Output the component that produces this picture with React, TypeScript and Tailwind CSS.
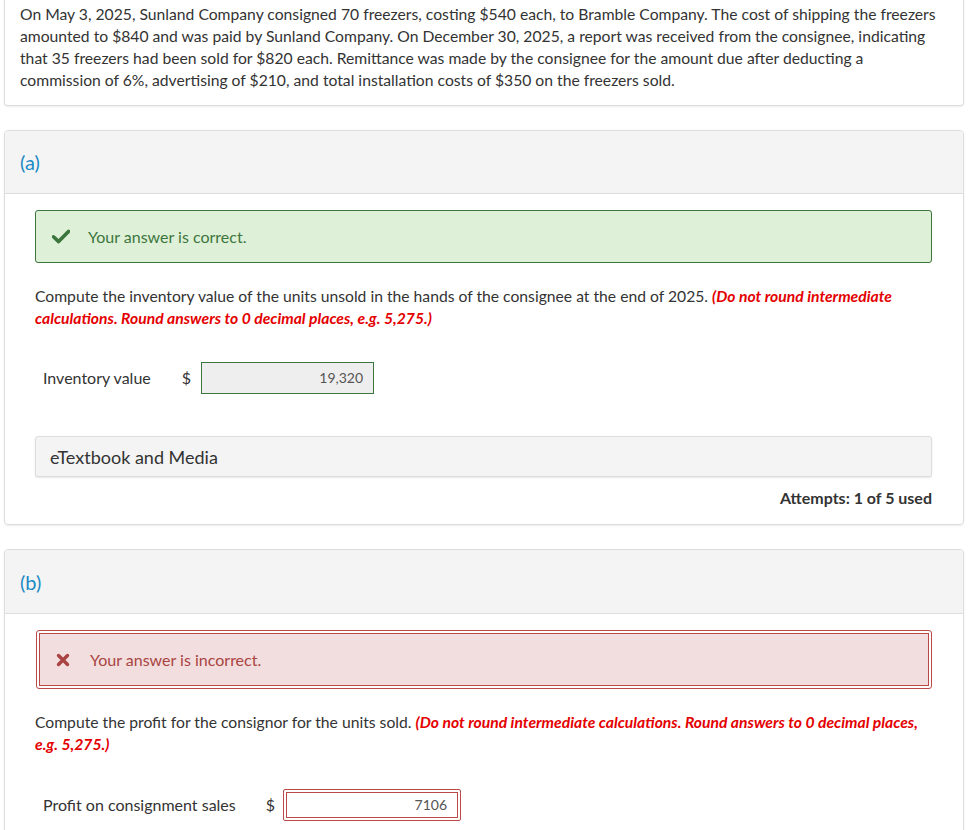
import React from "react";

const font = { fontFamily: "Lato, 'Open Sans', Arial, sans-serif" };

function Check() {
  return (
    <svg width="18" height="15" viewBox="0 0 18 15" className="shrink-0">
      <path d="M1.5 7.8 L6.6 12.6 L16.5 2.4" fill="none" stroke="#3c763d" strokeWidth="3.6" strokeLinecap="round" strokeLinejoin="round" />
    </svg>
  );
}

function Cross() {
  return (
    <svg width="14" height="14" viewBox="0 0 14 14" className="shrink-0">
      <path d="M2.5 2.5 L11.5 11.5 M11.5 2.5 L2.5 11.5" fill="none" stroke="#a94442" strokeWidth="3.4" strokeLinecap="round" />
    </svg>
  );
}

export default function App() {
  return (
    <div className="min-h-screen bg-white text-[#333] text-[15.7px] leading-[22px]" style={font}>
      <div className="w-[960px] ml-[4px] flex flex-col gap-[24px]">
        {/* Problem statement */}
        <div className="border border-t-0 border-[#ddd] rounded-b-[4px] shadow-[0_1px_2px_rgba(0,0,0,0.08)] pl-[15px] pr-[20px] pt-[3px] pb-[14px]">
          <p>
            On May 3, 2025, Sunland Company consigned 70 freezers, costing $540 each, to Bramble Company. The cost of shipping the freezers
            amounted to $840 and was paid by Sunland Company. On December 30, 2025, a report was received from the consignee, indicating
            that 35 freezers had been sold for $820 each. Remittance was made by the consignee for the amount due after deducting a
            commission of 6%, advertising of $210, and total installation costs of $350 on the freezers sold.
          </p>
        </div>

        {/* Part (a) */}
        <div className="border border-[#ddd] rounded-[4px] shadow-[0_1px_2px_rgba(0,0,0,0.08)]">
          <div className="bg-[#f4f4f4] border-b border-[#ddd] h-[63px] flex items-center pl-[15px] rounded-t-[4px]">
            <span className="text-[20px] text-[#1b8ac5]">(a)</span>
          </div>
          <div className="pl-[30px] pr-[31px] pt-[16px] pb-[15px]">
            <div className="h-[53px] bg-[#dff0d8] border border-[#3c763d] rounded-[3px] flex items-center pl-[16px] gap-[18px]">
              <Check />
              <span className="text-[#3c763d] text-[16px]">Your answer is correct.</span>
            </div>
            <p className="mt-[22px]">
              Compute the inventory value of the units unsold in the hands of the consignee at the end of 2025.{" "}
              <span className="text-[#e40000] font-bold italic">
                (Do not round intermediate calculations. Round answers to 0 decimal places, e.g. 5,275.)
              </span>
            </p>
            <div className="mt-[33px] flex items-center pl-[8px]">
              <span className="text-[16px]">Inventory value</span>
              <span className="ml-[31px] text-[16px]">$</span>
              <div className="ml-[10px] w-[173px] h-[32px] bg-[#eee] border border-[#3c763d] flex items-center justify-end pr-[10px] text-[14px] text-[#555]">
                19,320
              </div>
            </div>
            <div className="mt-[42px] h-[41px] bg-[#f4f4f4] border border-[#ddd] rounded-[3px] shadow-[0_1px_2px_rgba(0,0,0,0.1)] flex items-center pl-[14px] text-[18px]">
              eTextbook and Media
            </div>
            <div className="mt-[10px] text-right font-bold text-[16px]">Attempts: 1 of 5 used</div>
          </div>
        </div>

        {/* Part (b) */}
        <div className="border border-[#ddd] rounded-[4px] shadow-[0_1px_2px_rgba(0,0,0,0.08)]">
          <div className="bg-[#f4f4f4] border-b border-[#ddd] h-[64px] flex items-center pl-[15px] rounded-t-[4px]">
            <span className="text-[20px] text-[#1b8ac5]">(b)</span>
          </div>
          <div className="pl-[31px] pr-[31px] pt-[16px] pb-[10px]">
            <div className="h-[59px] border border-[#b94a48] rounded-[3px] p-[2px]">
              <div className="h-full bg-[#f2dede] border border-[#b94a48] flex items-center pl-[16px] gap-[20px]">
                <Cross />
                <span className="text-[#a94442] text-[16px]">Your answer is incorrect.</span>
              </div>
            </div>
            <p className="mt-[22px] -ml-[1px]">
              Compute the profit for the consignor for the units sold.{" "}
              <span className="text-[#e40000] font-bold italic">
                (Do not round intermediate calculations. Round answers to 0 decimal places, e.g. 5,275.)
              </span>
            </p>
            <div className="mt-[34px] flex items-center pl-[7px]">
              <span className="text-[16px]">Profit on consignment sales</span>
              <span className="ml-[30px] text-[16px]">$</span>
              <div className="ml-[8px] w-[178px] h-[32px] border border-[#b94a48] rounded-[2px] p-[2px]">
                <div className="h-full bg-white border border-[#b94a48] flex items-center justify-end pr-[10px] text-[14px] text-[#555]">
                  7106
                </div>
              </div>
            </div>
            <div className="h-[40px]" />
          </div>
        </div>
      </div>
    </div>
  );
}
